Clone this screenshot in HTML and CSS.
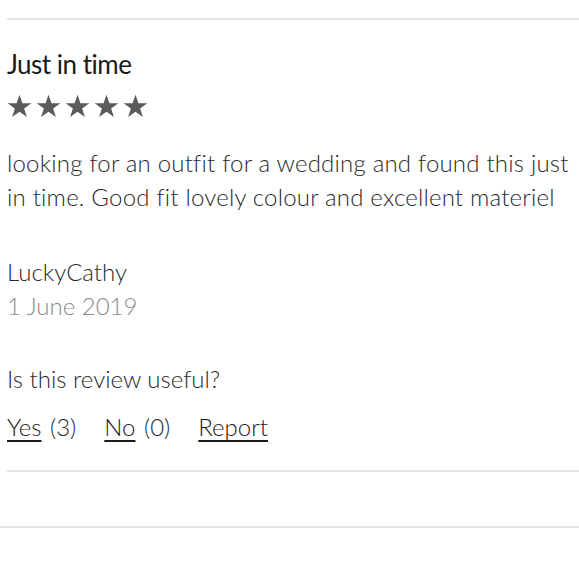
FILE: index.html
```html
<!DOCTYPE html>
<html>
<head>
<meta charset="utf-8">
<link rel="stylesheet" href="styles.css">
</head>
<body>
<div class="review">
  <h3 class="title">Just in time</h3>
  <div class="stars">
    <svg viewBox="0 0 24 24" class="star"><path d="M12 0.8l2.8 8.1h8.6l-6.95 5.05 2.65 8.2L12 17.1l-7.1 5.05 2.65-8.2L0.6 8.9h8.6z"/></svg>
    <svg viewBox="0 0 24 24" class="star"><path d="M12 0.8l2.8 8.1h8.6l-6.95 5.05 2.65 8.2L12 17.1l-7.1 5.05 2.65-8.2L0.6 8.9h8.6z"/></svg>
    <svg viewBox="0 0 24 24" class="star"><path d="M12 0.8l2.8 8.1h8.6l-6.95 5.05 2.65 8.2L12 17.1l-7.1 5.05 2.65-8.2L0.6 8.9h8.6z"/></svg>
    <svg viewBox="0 0 24 24" class="star"><path d="M12 0.8l2.8 8.1h8.6l-6.95 5.05 2.65 8.2L12 17.1l-7.1 5.05 2.65-8.2L0.6 8.9h8.6z"/></svg>
    <svg viewBox="0 0 24 24" class="star"><path d="M12 0.8l2.8 8.1h8.6l-6.95 5.05 2.65 8.2L12 17.1l-7.1 5.05 2.65-8.2L0.6 8.9h8.6z"/></svg>
  </div>
  <p class="text">looking for an outfit for a wedding and found this just in time. Good fit lovely colour and excellent materiel</p>
  <div class="author">LuckyCathy</div>
  <div class="date">1 June 2019</div>
  <p class="question">Is this review useful?</p>
  <div class="actions">
    <span class="action"><a href="#" class="link">Yes</a> (3)</span>
    <span class="action"><a href="#" class="link">No</a> (0)</span>
    <span class="action"><a href="#" class="link">Report</a></span>
  </div>
</div>
<div class="next"></div>
</body>
</html>
```
FILE: styles.css
```css
html, body {
  margin: 0;
  padding: 0;
  background: #fff;
}
body {
  font-family: "Lato", "Open Sans", sans-serif;
  font-weight: 300;
  font-variant-ligatures: none;
  color: #2a2a2a;
  width: 579px;
}
.review {
  margin-left: 7px;
  padding-top: 30px;
  border-top: 2px solid #e3e3e3;
  margin-top: 18px;
  padding-bottom: 26px;
  border-bottom: 2px solid #e3e3e3;
}
.title {
  margin: 0;
  font-size: 26px;
  font-weight: 400;
  letter-spacing: -0.5px;
  line-height: 28px;
  color: #1a1a1a;
}
.stars {
  display: flex;
  gap: 4px;
  margin-top: 16px;
}
.star {
  width: 25px;
  height: 25px;
  fill: #5b5b5b;
}
.text {
  margin: 27px 0 0;
  font-size: 24px;
  line-height: 34px;
  letter-spacing: 0.2px;
}
.author {
  margin-top: 41px;
  font-size: 24px;
  line-height: 34px;
}
.date {
  font-size: 24px;
  line-height: 34px;
  color: #8a8a8a;
}
.question {
  margin: 39px 0 0;
  font-size: 24px;
  line-height: 34px;
}
.actions {
  display: flex;
  gap: 28px;
  margin-top: 14px;
  font-size: 24px;
  line-height: 34px;
  word-spacing: 2px;
}
.link {
  color: #1a1a1a;
  text-decoration: underline;
  text-decoration-thickness: 2px;
  text-underline-offset: 4px;
}
.next {
  margin-top: 54px;
  border-top: 2px solid #e3e3e3;
}
```
